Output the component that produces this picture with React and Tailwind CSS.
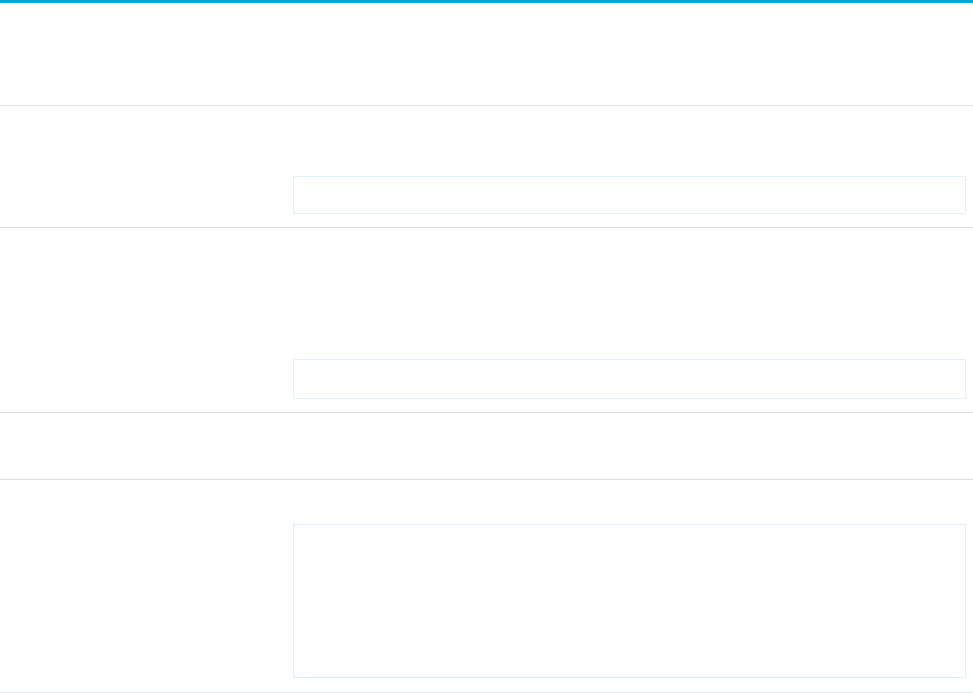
export default function App() {
  const Row = ({ h, children, cls = "" }) => (
    <div className={`flex border-b border-[#d7dfe4] ${cls}`} style={{ height: h }}>
      <div className="w-[293px] shrink-0" />
      <div className="flex flex-1 flex-col justify-end pr-[7px] pb-[14px]">{children}</div>
    </div>
  );
  return (
    <div className="w-[973px] h-[693px] bg-white font-['Liberation_Sans',sans-serif] overflow-hidden">
      <div className="h-[3px] bg-[#00a1e0]" />
      <div className="flex h-[103px] border-b border-[#e2e6e9]" />
      <div className="flex h-[122px] border-b border-[#d7dfe4]">
        <div className="w-[293px] shrink-0" />
        <div className="flex flex-1 flex-col justify-end pr-[7px] pb-[13px]">
          <div className="h-[38px] border border-[#e1f0f8] bg-white" />
        </div>
      </div>
      <div className="flex h-[185px] border-b border-[#d7dfe4]">
        <div className="w-[293px] shrink-0" />
        <div className="flex flex-1 flex-col justify-end pr-[7px] pb-[13px]">
          <div className="h-[40px] border border-[#e1f0f8] bg-white" />
        </div>
      </div>
      <div className="flex h-[67px] border-b border-[#d7dfe4]" />
      <div className="flex h-[213px] border-b border-[#e2e6e9]">
        <div className="w-[293px] shrink-0" />
        <div className="flex flex-1 flex-col justify-end pr-[7px] pb-[14px]">
          <div className="h-[154px] border border-[#d9eef8] bg-white" />
        </div>
      </div>
    </div>
  );
}
